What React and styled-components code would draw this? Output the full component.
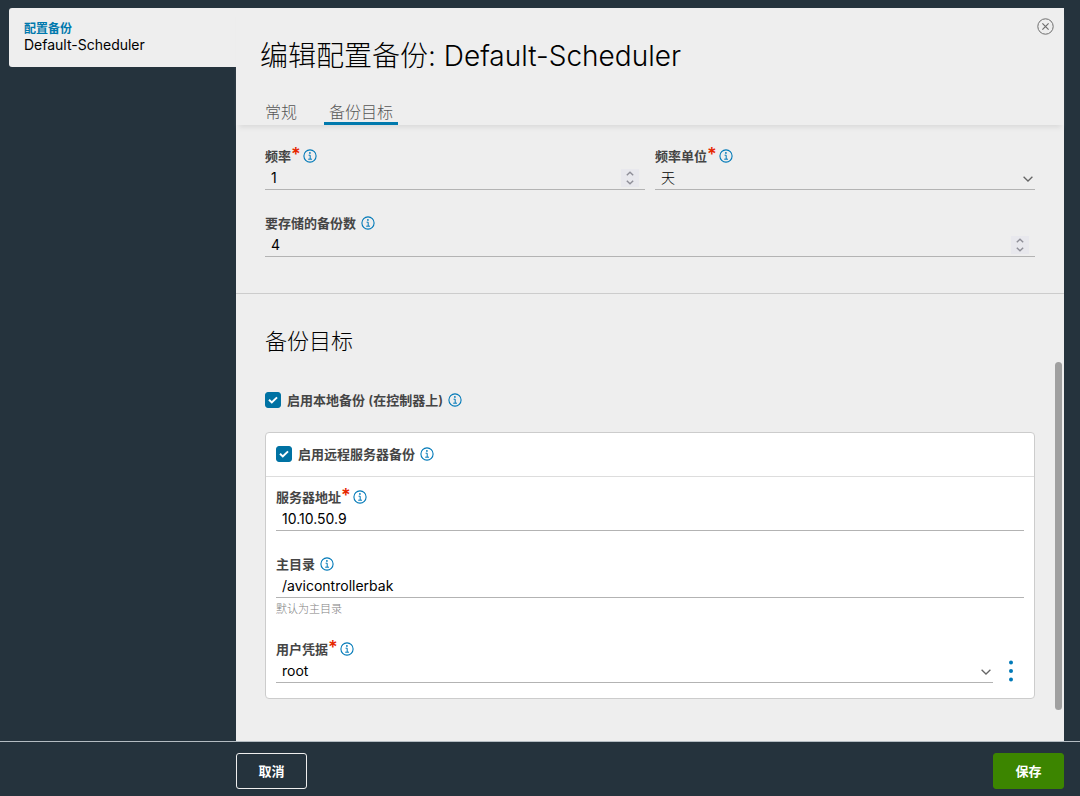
import { useState } from "react";
import styled, { createGlobalStyle } from "styled-components";

const InfoIcon = () => (
    <Icon width="14" height="14" viewBox="0 0 14 14" fill="none" stroke="#0079b8">
        <circle cx="7" cy="7" r="6.1" strokeWidth="1.1" />
        <path d="M5.6 6.2H7.2V10M5.2 10.2H9" strokeWidth="1" />
        <circle cx="6.9" cy="3.9" r="0.9" fill="#0079b8" stroke="none" />
    </Icon>
)

const Chevron = () => (
    <Icon width="10" height="6" viewBox="0 0 10 6" fill="none" stroke="#666" strokeWidth="1.3">
        <path d="M0.6 0.7L5 5L9.4 0.7" />
    </Icon>
)

const FieldLabel = ({ id, text, required }) => (
    <LabelRow $required={required}>
        <Label htmlFor={id}>{text}{required ? <Star>*</Star> : null}</Label>
        <InfoIcon />
    </LabelRow>
)

const NumberField = ({ id, label, required, initial }) => {
    const [value, setValue] = useState(initial);

    return (
        <div>
            <FieldLabel id={id} text={label} required={required} />
            <Control>
                <Input id={id} type="number" value={value} onChange={(e) => setValue(Number(e.target.value))} />
                <Spinner>
                    <SpinButton type="button" aria-label="+" onClick={() => setValue(value + 1)}>
                        <svg width="8" height="5" viewBox="0 0 8 5" fill="none" stroke="#8f8f98" strokeWidth="1.4">
                            <path d="M0.8 4.2L4 1.2L7.2 4.2" />
                        </svg>
                    </SpinButton>
                    <SpinButton type="button" aria-label="-" onClick={() => setValue(value - 1)}>
                        <svg width="8" height="5" viewBox="0 0 8 5" fill="none" stroke="#8f8f98" strokeWidth="1.4">
                            <path d="M0.8 0.8L4 3.8L7.2 0.8" />
                        </svg>
                    </SpinButton>
                </Spinner>
            </Control>
        </div>
    )
}

const TextField = ({ id, label, required, initial, hint }) => (
    <div>
        <FieldLabel id={id} text={label} required={required} />
        <Control>
            <Input id={id} type="text" defaultValue={initial} />
        </Control>
        {hint ? <Hint>{hint}</Hint> : null}
    </div>
)

const SelectField = ({ id, label, required, options, light }) => (
    <div>
        <FieldLabel id={id} text={label} required={required} />
        <Control>
            <SelectBox>
                <Select id={id} $light={light}>
                    {options.map((option) => <option key={option}>{option}</option>)}
                </Select>
                <Chevron />
            </SelectBox>
        </Control>
    </div>
)

const CheckField = ({ id, label }) => (
    <CheckRow>
        <CheckBox>
            <input id={id} type="checkbox" defaultChecked />
            <svg width="16" height="16" viewBox="0 0 16 16" fill="none" stroke="#fff" strokeWidth="2">
                <path d="M4 7.8L6.8 10.4L12 5.4" />
            </svg>
        </CheckBox>
        <Label htmlFor={id}>{label}</Label>
        <InfoIcon />
    </CheckRow>
)

export default function App() {
    const [tab, setTab] = useState('备份目标');

    return (
        <Page>
            <GlobalStyle />
            <Main>
                <Sidebar>
                    <Crumb>
                        <strong>配置备份</strong>
                        <span>Default-Scheduler</span>
                    </Crumb>
                </Sidebar>
                <Panel>
                    <Header>
                        <Title>编辑配置备份: Default-Scheduler</Title>
                        <CloseButton type="button" aria-label="关闭">
                            <svg width="17" height="17" viewBox="0 0 17 17" fill="none" stroke="#6e6e6e">
                                <circle cx="8.5" cy="8.5" r="7.7" />
                                <path d="M5.4 5.4L11.6 11.6M11.6 5.4L5.4 11.6" strokeWidth="1.2" />
                            </svg>
                        </CloseButton>
                        <Tabs>
                            {['常规', '备份目标'].map((name) =>
                                <Tab key={name} type="button" $active={tab === name} onClick={() => setTab(name)}>{name}</Tab>)}
                        </Tabs>
                    </Header>
                    <Body>
                        <Schedule>
                            <Columns>
                                <NumberField id="frequency" label="频率" required initial={1} />
                                <SelectField id="unit" label="频率单位" required light options={['天', '周', '月']} />
                            </Columns>
                            <NumberField id="count" label="要存储的备份数" initial={4} />
                        </Schedule>
                        <Target>
                            <Heading>备份目标</Heading>
                            <CheckField id="local" label="启用本地备份 (在控制器上)" />
                            <Card>
                                <CardHeader>
                                    <CheckField id="remote" label="启用远程服务器备份" />
                                </CardHeader>
                                <CardBody>
                                    <TextField id="server" label="服务器地址" required initial="10.10.50.9" />
                                    <TextField id="home" label="主目录" initial="/avicontrollerbak" hint="默认为主目录" />
                                    <Credentials>
                                        <SelectField id="user" label="用户凭据" required options={['root']} />
                                        <MoreButton type="button" aria-label="更多">
                                            <svg width="4" height="22" viewBox="0 0 4 22" fill="#0079b8">
                                                <circle cx="2" cy="2.5" r="2" />
                                                <circle cx="2" cy="11" r="2" />
                                                <circle cx="2" cy="19.5" r="2" />
                                            </svg>
                                        </MoreButton>
                                    </Credentials>
                                </CardBody>
                            </Card>
                        </Target>
                        <ScrollThumb />
                    </Body>
                </Panel>
            </Main>
            <Footer>
                <Button type="button">取消</Button>
                <Button type="button" $primary>保存</Button>
            </Footer>
        </Page>
    );
}

const GlobalStyle = createGlobalStyle`
    * {
        box-sizing: border-box;
    }
    body {
        margin: 0;
        background: #25333d;
    }
    body, button, input, select {
        font-family: Inter, "Noto Sans CJK SC", sans-serif;
    }
`;

const Page = styled.div`
    display: flex;
    flex-direction: column;
    min-height: 100vh;
`;

const Main = styled.div`
    flex: 1;
    display: grid;
    grid-template-columns: 227px 1fr;
    padding: 8px 16px 0 9px;
`;

const Sidebar = styled.aside`
    display: flex;
    flex-direction: column;
`;

const Crumb = styled.div`
    display: flex;
    flex-direction: column;
    padding: 13px 15px 14px;
    border-radius: 3px 0 0 3px;
    background: #eee;
    font-size: 14px;
    line-height: 16px;
    color: #000;

    strong {
        font-size: 12px;
        color: #0079ad;
    }
`;

const Panel = styled.main`
    display: flex;
    flex-direction: column;
    background: #eee;
`;

const Header = styled.header`
    display: grid;
    grid-template-columns: 1fr auto;
    padding: 10px 10px 0 24px;
    box-shadow: 0 6px 4px -3px #ddd;
`;

const Title = styled.h1`
    margin: 19px 0 0;
    font-size: 28px;
    font-weight: 300;
    line-height: 38px;
    color: #000;
`;

const CloseButton = styled.button`
    width: 17px;
    height: 17px;
    padding: 0;
    border: 0;
    background: none;

    svg {
        display: block;
    }
`;

const Tabs = styled.nav`
    display: flex;
    gap: 22px;
    margin-top: 23px;
`;

const Tab = styled.button`
    height: 27px;
    padding: 0 5px;
    border: 0;
    background: none;
    box-shadow: ${(props) => props.$active ? 'inset 0 -3px 0 #0079ad' : 'none'};
    font-size: 16px;
    font-weight: 300;
    line-height: 24px;
    color: #565656;
`;

const Body = styled.div`
    position: relative;
    flex: 1;
`;

const Schedule = styled.section`
    display: grid;
    gap: 25px;
    padding: 23px 29px 36px;
    border-bottom: 1px solid #ccc;
`;

const Columns = styled.div`
    display: grid;
    grid-template-columns: 1fr 1fr;
    gap: 10px;
`;

const Target = styled.section`
    padding: 31px 29px 42px;
`;

const Heading = styled.h2`
    margin: 0 0 34px;
    font-size: 22px;
    font-weight: 300;
    line-height: 32px;
    color: #000;
`;

const Icon = styled.svg`
    flex: none;
`;

const LabelRow = styled.div`
    display: flex;
    align-items: center;
    gap: ${(props) => props.$required ? '2px' : '5px'};
    height: 16px;
`;

const Label = styled.label`
    font-size: 13px;
    font-weight: 600;
    line-height: 16px;
    color: #454545;
`;

const Star = styled.span`
    font-size: 18px;
    line-height: 0;
    color: #e62700;
`;

const Control = styled.div`
    display: flex;
    align-items: center;
    height: 26px;
    padding-top: 2px;
    border-bottom: 1px solid #b3b3b3;
`;

const Input = styled.input`
    flex: 1;
    min-width: 0;
    height: 21px;
    padding: 0 6px;
    border: 0;
    outline: 0;
    background: none;
    font-size: 14px;
    color: #000;
    appearance: textfield;

    &::-webkit-inner-spin-button {
        display: none;
    }
`;

const Spinner = styled.div`
    display: flex;
    flex-direction: column;
    width: 18px;
    height: 18px;
    margin-right: 6px;
    background: #e8e8ed;
`;

const SpinButton = styled.button`
    display: flex;
    flex: 1;
    align-items: center;
    justify-content: center;
    padding: 0;
    border: 0;
    background: none;
`;

const SelectBox = styled.div`
    flex: 1;
    display: grid;
    align-items: center;

    > * {
        grid-area: 1 / 1;
    }
    > svg {
        justify-self: end;
        margin: 3px 2px 0 0;
        pointer-events: none;
    }
`;

const Select = styled.select`
    height: 21px;
    padding: 0 20px 0 6px;
    border: 0;
    outline: 0;
    background: none;
    appearance: none;
    font-size: 14px;
    font-weight: ${(props) => props.$light ? 300 : 400};
    color: #000;
`;

const Hint = styled.p`
    margin: 0;
    padding-top: 5px;
    font-size: 11px;
    font-weight: 300;
    line-height: 13px;
    color: #808080;
`;

const CheckRow = styled.div`
    display: flex;
    align-items: center;
    gap: 5px;
    height: 18px;
`;

const CheckBox = styled.span`
    display: grid;
    padding-right: 1px;

    > * {
        grid-area: 1 / 1;
    }
    input {
        width: 16px;
        height: 16px;
        margin: 0;
        border: 1px solid #0072a3;
        border-radius: 3px;
        appearance: none;
    }
    input:checked {
        background: #0072a3;
    }
    svg {
        pointer-events: none;
    }
`;

const Card = styled.div`
    margin-top: 23px;
    border: 1px solid #ccc;
    border-radius: 4px;
    background: #fff;
`;

const CardHeader = styled.div`
    padding: 12px 10px 13px;
    border-bottom: 1px solid #ddd;
`;

const CardBody = styled.div`
    display: grid;
    gap: 25px;
    padding: 12px 10px 15px;
`;

const Credentials = styled.div`
    display: grid;
    grid-template-columns: 1fr 26px;
    align-items: end;
    gap: 5px;
`;

const MoreButton = styled.button`
    display: flex;
    align-items: center;
    justify-content: center;
    height: 24px;
    padding: 0;
    border: 0;
    background: none;
`;

// lies over the right edge of the form
const ScrollThumb = styled.div`
    position: absolute;
    top: 237px;
    right: 2px;
    bottom: 31px;
    width: 7px;
    border-radius: 4px;
    background: #a0a0a0;
`;

const Footer = styled.footer`
    display: flex;
    justify-content: space-between;
    padding: 11px 16px 7px 236px;
    border-top: 1px solid #b4bcc2;
    background: #25333d;
`;

const Button = styled.button`
    width: 71px;
    height: 36px;
    padding: 0 0 2px;
    border: 1px solid ${(props) => props.$primary ? '#3c8500' : '#eee'};
    border-radius: 3px;
    background: ${(props) => props.$primary ? '#3c8500' : 'none'};
    font-size: 13px;
    font-weight: 600;
    color: #fff;
`;
